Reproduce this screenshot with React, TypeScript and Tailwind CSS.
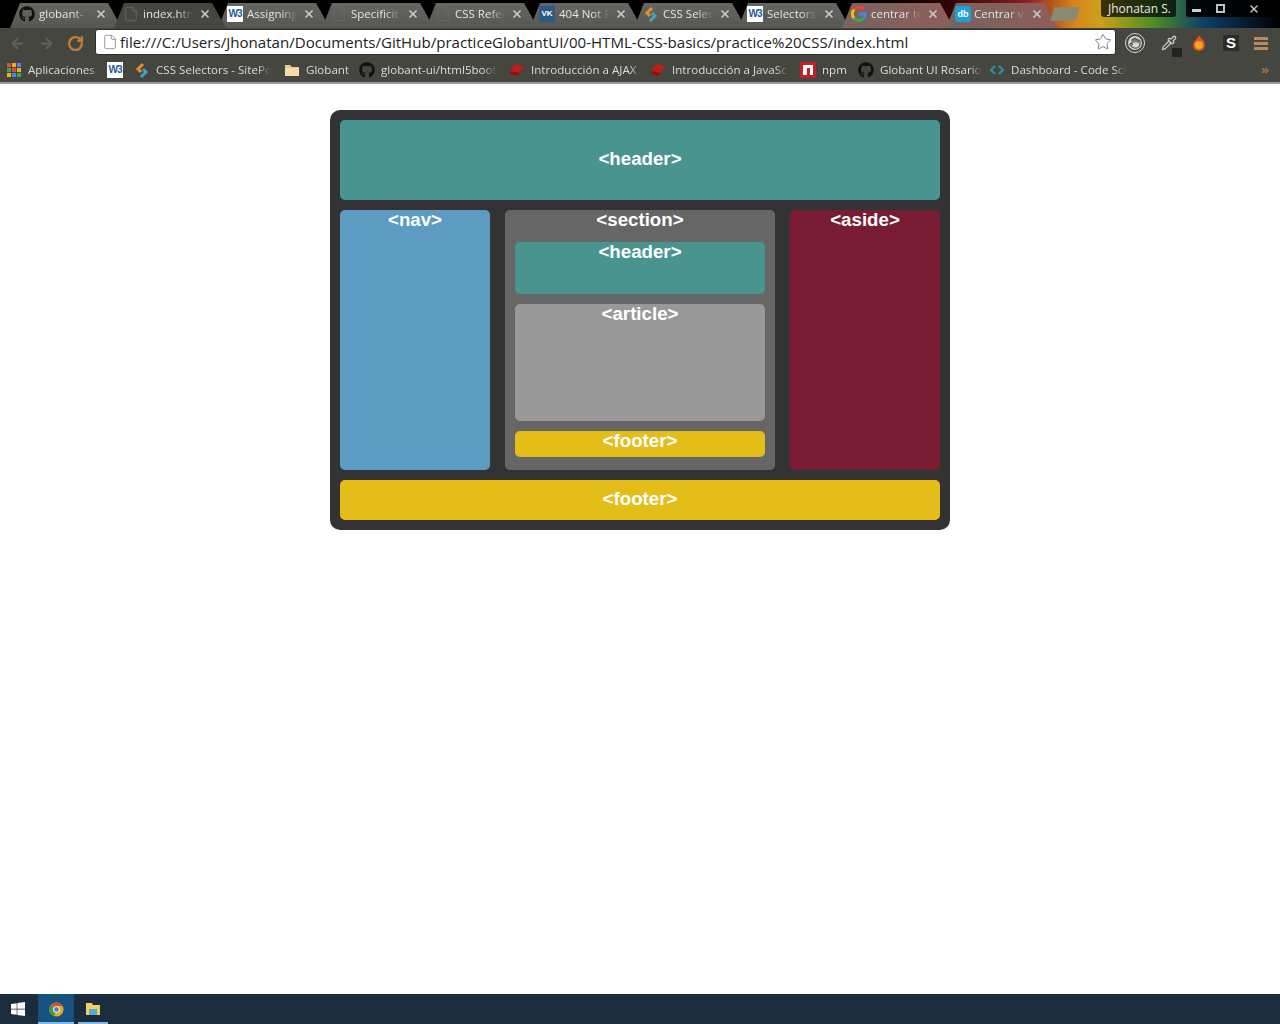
import React from 'react';
import { ArrowLeft, ArrowRight, File, Hand, Pipette, RotateCw, Star, X } from 'lucide-react';
import { FaGithub, FaWindows } from 'react-icons/fa';

function W3() {
  return (
    <span className="w-4 h-4 flex-none bg-white text-[#1c5c9c] font-['Liberation_Sans',sans-serif] font-bold text-[10px] leading-4 text-center tracking-[-1px]">
      W3
    </span>
  );
}

function SitePoint() {
  return (
    <svg viewBox="0 0 16 16" className="w-4 h-4 flex-none" fill="none" strokeWidth="3">
      <path d="M9 2 L4 7 L7 10" stroke="#f08a24" />
      <path d="M9 7 L12 10 L7 15" stroke="#3aa6c9" />
    </svg>
  );
}

function Google() {
  return (
    <svg viewBox="0 0 16 16" className="w-4 h-4 flex-none" fill="none" strokeWidth="3">
      <path d="M13 3.5 A6.3 6.3 0 0 0 3 3.8" stroke="#ea4335" />
      <path d="M3 3.8 A6.3 6.3 0 0 0 3 12.2" stroke="#fbbc05" />
      <path d="M3 12.2 A6.3 6.3 0 0 0 12.6 12.4" stroke="#34a853" />
      <path d="M12.6 12.4 A6.3 6.3 0 0 0 14.3 8 L8 8" stroke="#4285f4" />
    </svg>
  );
}

function Vk() {
  return (
    <span className="w-4 h-4 flex-none bg-[#2c5a80] text-white font-['Liberation_Sans',sans-serif] font-bold text-[8px] leading-4 text-center">
      VK
    </span>
  );
}

function Db() {
  return (
    <span className="w-4 h-4 flex-none rounded-[3px] bg-[#1f9fd8] text-white font-['Liberation_Sans',sans-serif] font-bold text-[9px] leading-4 text-center">
      db
    </span>
  );
}

function Blank() {
  return <File className="w-4 h-4 flex-none text-[#6a6a66]" strokeWidth={1.25} />;
}

function Apps() {
  const colors = ['#e8453c', '#f4b400', '#4285f4', '#34a853', '#e8453c', '#f4b400', '#f4b400', '#4285f4', '#34a853'];
  return (
    <div className="w-[15px] h-[14px] pr-px grid grid-cols-3 gap-px flex-none">
      {colors.map((c, i) => (
        <svg key={i} viewBox="0 0 4 4" className="w-full h-full">
          <rect width="4" height="4" fill={c} />
        </svg>
      ))}
    </div>
  );
}

function Folder() {
  return (
    <svg viewBox="0 0 16 16" className="w-4 h-4 flex-none">
      <path d="M1 3 H6 L8 5 H15 V14 H1 Z" fill="#e8c98a" />
      <rect x="1" y="6" width="14" height="8" fill="#f5dca6" />
    </svg>
  );
}

function RedBook() {
  return (
    <svg viewBox="0 0 16 16" className="w-4 h-4 flex-none">
      <path d="M6 2 L15 4 L10 11 L1 9 Z" fill="#c41a1a" />
      <path d="M1 9 L10 11 L9 14 L1 12 Z" fill="#8a1010" />
    </svg>
  );
}

function Npm() {
  return (
    <svg viewBox="0 0 16 16" className="w-4 h-4 flex-none">
      <rect width="16" height="16" fill="#c12127" />
      <rect x="3" y="3" width="10" height="10" fill="#fff" />
      <rect x="7" y="6" width="3" height="7" fill="#c12127" />
    </svg>
  );
}

function Code() {
  return (
    <svg viewBox="0 0 16 16" className="w-4 h-4 flex-none" fill="none" stroke="#2b93a8" strokeWidth="2">
      <path d="M6 4 L2 8 L6 12" />
      <path d="M10 4 L14 8 L10 12" />
    </svg>
  );
}

function GithubIcon() {
  return <FaGithub className="w-4 h-4 flex-none text-[#111]" />;
}

const TABS = [
  { title: 'globant-', icon: <FaGithub className="w-4 h-4 flex-none text-[#111]" />, gap: 'gap-[4px]' },
  { title: 'index.htm', icon: <Blank />, gap: 'gap-[4px]', active: true },
  { title: 'Assigning', icon: <W3 />, gap: 'gap-[4px]' },
  { title: 'Specificit', icon: <Blank />, gap: 'gap-[4px]' },
  { title: 'CSS Refer', icon: <Blank />, gap: 'gap-[4px]' },
  { title: '404 Not F', icon: <Vk />, gap: 'gap-[4px]' },
  { title: 'CSS Selec', icon: <SitePoint />, gap: 'gap-[4px]' },
  { title: 'Selectors', icon: <W3 />, gap: 'gap-[4px]' },
  { title: 'centrar te', icon: <Google />, gap: 'gap-[4px]', warm: true },
  { title: 'Centrar v', icon: <Db />, gap: 'gap-[3px]', warm: true },
];

const BOOKMARKS = [
  { title: 'Aplicaciones', icon: <Apps />, w: 'w-[100px]', text: 'w-[70px]' },
  { title: '', icon: <W3 />, w: 'w-[27px]', text: 'w-0' },
  { title: 'CSS Selectors - SitePo', icon: <SitePoint />, w: 'w-[150px]', text: 'w-[115px]' },
  { title: 'Globant', icon: <Folder />, w: 'w-[75px]', text: 'w-[46px]' },
  { title: 'globant-ui/html5boot', icon: <GithubIcon />, w: 'w-[150px]', text: 'w-[116px]' },
  { title: 'Introducción a AJAX', icon: <RedBook />, w: 'w-[141px]', text: 'w-[112px]' },
  { title: 'Introducción a JavaSc', icon: <RedBook />, w: 'w-[150px]', text: 'w-[117px]' },
  { title: 'npm', icon: <Npm />, w: 'w-[58px]', text: 'w-[28px]' },
  { title: 'Globant UI Rosario', icon: <GithubIcon />, w: 'w-[131px]', text: 'w-[102px]' },
  { title: 'Dashboard - Code Sch', icon: <Code />, w: 'w-[140px]', text: 'w-[116px]' },
];

function Box({ className, children }: { className: string; children: React.ReactNode }) {
  return (
    <div className={`rounded-[5px] text-center text-white font-bold text-[18.7px] leading-5 ${className}`}>
      {children}
    </div>
  );
}

export default function App() {
  return (
    <div className="h-screen flex flex-col bg-white overflow-hidden font-['Open_Sans',sans-serif]">

      {/* Browser chrome */}
      <div className="h-[84px] flex-none flex flex-col">
        <div className="h-7 flex-none flex items-end pl-[10px] bg-[linear-gradient(90deg,#000_0%,#000_68%,#2a0508_74%,#8a1d22_80%,#d8861a_84%,#c9a01c_86%,#4f8f22_90%,#0f3f66_94%,#000_100%)] relative">
          {TABS.map(tab => (
            <div
              key={tab.title}
              className={`w-[112px] h-[25px] flex-none -mr-2 pl-[8px] pr-[15px] pb-[4px] flex items-center [clip-path:polygon(0_100%,10px_0,98px_0,100%_100%)] ${
                tab.active ? 'relative z-10 bg-[#45463f]' : tab.warm ? 'bg-[linear-gradient(90deg,#77635f,#8f5d5b)] ' : 'bg-[linear-gradient(180deg,#666662,#565652)]'
              }`}
            >
              <div className={`flex items-center min-w-0 flex-1 pl-[1px] ${tab.gap}`}>
                {tab.icon}
                <span className="flex-1 min-w-0 overflow-hidden whitespace-nowrap text-[11.5px] text-[#e4e4e0] [mask-image:linear-gradient(90deg,#000_60%,transparent_90%)]">
                  {tab.title}
                </span>
              </div>
              <X className="w-3 h-3 flex-none text-[#c8c8c4]" strokeWidth={3.5} />
            </div>
          ))}

          {/* New tab button + user */}
          <div className="w-[30px] h-[14px] mb-[7px] bg-[#8a8a70] [clip-path:polygon(15%_0,100%_0,85%_100%,0_100%)]" />
          <div className="absolute right-[104px] top-0 h-[17px] pr-[5px] pl-[7px] bg-black/70 rounded-b-[3px] text-[12px] leading-[17px] text-[#e8e8e8]">
            Jhonatan S.
          </div>
          <div className="absolute right-0 top-0 w-[94px] h-[17px] pr-[6px] bg-black/90 rounded-bl-[3px] flex items-center text-[#c8c8c8]">
            <div className="w-5 flex justify-center">
              <div className="w-[9px] h-[3px] mt-1 bg-[#d0d0d0]" />
            </div>
            <div className="w-7 flex justify-center">
              <div className="w-[9px] h-[9px] border-2 border-[#c0c0c0]" />
            </div>
            <div className="flex-1 flex justify-center">
              <X className="w-3 h-3" strokeWidth={3} />
            </div>
          </div>
        </div>

        <div className="h-[30px] flex-none bg-[#45463f] flex items-center">
          <div className="w-[95px] flex-none flex items-center pl-[9px]">
            <ArrowLeft className="w-[17px] h-[17px] text-[#62635c]" strokeWidth={2.5} />
            <ArrowRight className="w-[17px] h-[17px] ml-3 text-[#62635c]" strokeWidth={2.5} />
            <RotateCw className="w-[17px] h-[17px] ml-3 text-[#c07a3a]" strokeWidth={3.5} />
          </div>
          <div className="w-[1021px] h-[26px] mb-[2px] flex-none bg-white rounded-[3px] border border-[#2c2c28] flex items-center pl-[6px] pr-[3px]">
            <File className="w-4 h-4 flex-none text-[#888]" strokeWidth={1.25} />
            <span className="ml-[2px] text-[15.08px] text-[#222] whitespace-nowrap flex-1">
              file:///C:/Users/Jhonatan/Documents/GitHub/practiceGlobantUI/00-HTML-CSS-basics/practice%20CSS/index.html
            </span>
            <Star className="w-[18px] h-[18px] text-[#777]" strokeWidth={1.25} />
          </div>
          <div className="flex-1 flex items-center pl-[10px]">
            <div className="w-[18px] h-[18px] flex-none rounded-full bg-[#d8d8d4] border-2 border-[#45463f] outline outline-[#d8d8d4] flex items-center justify-center">
              <Hand className="w-3 h-3 text-[#55554f]" strokeWidth={2.5} />
            </div>
            <div className="relative ml-[17px] w-4 h-4 flex-none">
              <Pipette className="w-4 h-4 text-[#c8c8c4]" />
              <div className="absolute -right-[5px] -bottom-[6px] w-[10px] h-[9px] bg-[#222] rounded-[1px]" />
            </div>
            <svg viewBox="0 0 16 16" className="ml-[14px] w-4 h-4 flex-none">
              <path d="M8 0 C9 3 14 5 14 10 A6 6 0 0 1 2 10 C2 6 7 4 8 0 Z" fill="#e8501c" />
              <circle cx="8" cy="10" r="4" fill="#f5a623" />
            </svg>
            <div className="ml-[16px] w-[16px] h-[16px] flex-none bg-[#2c2c28] text-white font-['Liberation_Sans',sans-serif] font-bold text-[15px] leading-4 text-center">
              S
            </div>
            <div className="ml-[15px] w-[14px] flex-none flex flex-col gap-[2px]">
              <div className="h-[3px] bg-[#b98a5e]" />
              <div className="h-[3px] bg-[#b98a5e]" />
              <div className="h-[3px] bg-[#b98a5e]" />
            </div>
          </div>
        </div>

        <div className="h-6 flex-none bg-[#45463f] flex items-center pl-[7px] pr-[11px]">
          {BOOKMARKS.map(b => (
            <div key={b.title || 'w3'} className={`${b.w} flex-none flex items-center gap-[6px]`}>
              {b.icon}
              {b.title && (
                <span className={`${b.text} flex-none overflow-hidden whitespace-nowrap text-[11.6px] text-[#dcdcd8] [mask-image:linear-gradient(90deg,#000_88%,transparent_100%)]`}>
                  {b.title}
                </span>
              )}
            </div>
          ))}
          <span className="ml-auto text-[13px] font-bold text-[#a86f38]">»</span>
        </div>
        <div className="h-[2px] flex-none bg-[#9a9a96]" />
      </div>

      {/* Page */}
      <main className="flex-1 pt-[26px] font-['Liberation_Sans',sans-serif]">
        <div className="w-[620px] mx-auto p-[10px] bg-[#333333] rounded-[10px] flex flex-col gap-[10px]">
          <Box className="h-20 pb-[2px] bg-[#4a9490] flex items-center justify-center">&lt;header&gt;</Box>

          <div className="h-[260px] flex justify-between">
            <Box className="w-[150px] bg-[#5c9bc2]">&lt;nav&gt;</Box>

            <Box className="w-[270px] px-[10px] bg-[#666666] flex flex-col">
              &lt;section&gt;
              <Box className="mt-3 h-[52px] bg-[#4a9490]">&lt;header&gt;</Box>
              <Box className="mt-[10px] h-[117px] bg-[#999999]">&lt;article&gt;</Box>
              <Box className="mt-[10px] h-[26px] bg-[#e5bd19]">&lt;footer&gt;</Box>
            </Box>

            <Box className="w-[150px] bg-[#771c33]">&lt;aside&gt;</Box>
          </div>

          <Box className="h-10 pb-[2px] bg-[#e5bd19] flex items-center justify-center">&lt;footer&gt;</Box>
        </div>
      </main>

      {/* Taskbar */}
      <div className="h-[30px] flex-none bg-[#1b2c3c] flex items-stretch">
        <div className="w-[38px] pr-[2px] flex items-center justify-center">
          <FaWindows className="w-4 h-4 text-white" />
        </div>
        <div className="w-9 pt-[2px] bg-[#17517f] border-b-2 border-[#7fb8e8] flex items-center justify-center">
          <svg viewBox="0 0 16 16" className="w-[15px] h-[15px]">
            <circle cx="8" cy="8" r="7.5" fill="#e0b020" />
            <path d="M8 .5 A7.5 7.5 0 0 1 14.5 4.2 L8 4.2 A3.8 3.8 0 0 0 4.6 6.3 L2 2.8 A7.5 7.5 0 0 1 8 .5 Z" fill="#d84a38" />
            <path d="M2 2.8 L4.6 6.3 A3.8 3.8 0 0 0 7 11.7 L5 15 A7.5 7.5 0 0 1 2 2.8 Z" fill="#3c9a4c" />
            <circle cx="8" cy="8" r="3.4" fill="#fff" />
            <circle cx="8" cy="8" r="2.6" fill="#4a80d8" />
          </svg>
        </div>
        <div className="w-[30px] ml-1 pt-[2px] border-b-2 border-[#7fb8e8] flex items-center justify-center">
          <svg viewBox="0 0 16 16" className="w-4 h-4">
            <path d="M1 2 H7 L8 4 H15 V14 H1 Z" fill="#f0d060" />
            <rect x="4" y="8" width="8" height="6" fill="#4ab0d0" />
          </svg>
        </div>
      </div>
    </div>
  );
}
